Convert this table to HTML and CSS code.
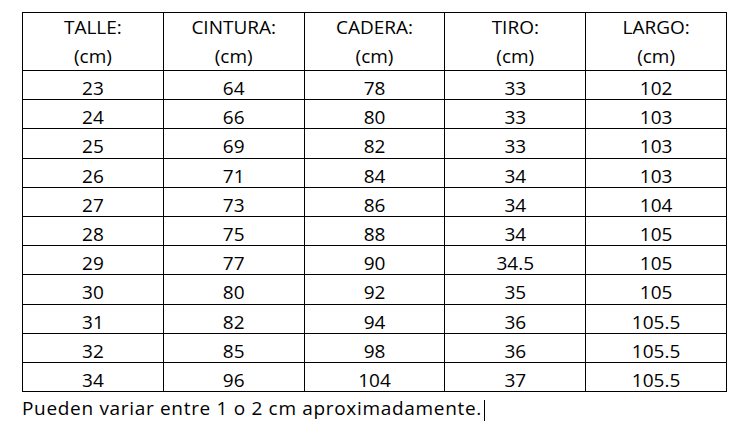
FILE: index.html
```html
<!DOCTYPE html>
<html lang="es">
<head>
<meta charset="utf-8">
<link rel="stylesheet" href="styles.css">
</head>
<body>
<div class="page">
<table class="sizes">
<thead>
<tr><th>TALLE:<br>(cm)</th><th>CINTURA:<br>(cm)</th><th>CADERA:<br>(cm)</th><th>TIRO:<br>(cm)</th><th>LARGO:<br>(cm)</th></tr>
</thead>
<tbody>
<tr><td>23</td><td>64</td><td>78</td><td>33</td><td>102</td></tr>
<tr><td>24</td><td>66</td><td>80</td><td>33</td><td>103</td></tr>
<tr><td>25</td><td>69</td><td>82</td><td>33</td><td>103</td></tr>
<tr><td>26</td><td>71</td><td>84</td><td>34</td><td>103</td></tr>
<tr><td>27</td><td>73</td><td>86</td><td>34</td><td>104</td></tr>
<tr><td>28</td><td>75</td><td>88</td><td>34</td><td>105</td></tr>
<tr><td>29</td><td>77</td><td>90</td><td>34.5</td><td>105</td></tr>
<tr><td>30</td><td>80</td><td>92</td><td>35</td><td>105</td></tr>
<tr><td>31</td><td>82</td><td>94</td><td>36</td><td>105.5</td></tr>
<tr><td>32</td><td>85</td><td>98</td><td>36</td><td>105.5</td></tr>
<tr><td>34</td><td>96</td><td>104</td><td>37</td><td>105.5</td></tr>
</tbody>
</table>
<p class="note">Pueden variar entre 1 o 2 cm aproximadamente.<span class="caret"></span></p>
</div>
</body>
</html>
```
FILE: styles.css
```css
html, body {
  margin: 0;
  padding: 0;
  background: #ffffff;
}
.page {
  padding: 12px 0 0 22px;
  font-family: "Open Sans", "Liberation Sans", sans-serif;
  color: #000;
}
.sizes {
  border-collapse: collapse;
  width: 705px;
  table-layout: fixed;
  font-size: 19px;
}
.sizes th, .sizes td {
  border: 1px solid #000;
  text-align: center;
  font-weight: normal;
  vertical-align: top;
}
.sizes th {
  padding: 0;
  line-height: 28.5px;
  height: 57px;
  box-sizing: border-box;
}
.sizes td {
  padding: 7px 0 0 0;
  line-height: 21.2px;
  height: 28.2px;
  box-sizing: border-box;
}
.note {
  margin: 2px 0 0 0;
  font-size: 19px;
  line-height: 28px;
  letter-spacing: 0.68px;
}
.caret {
  display: inline-block;
  width: 1px;
  height: 21px;
  background: #000;
  vertical-align: -6px;
  margin-left: 2px;
}
```
